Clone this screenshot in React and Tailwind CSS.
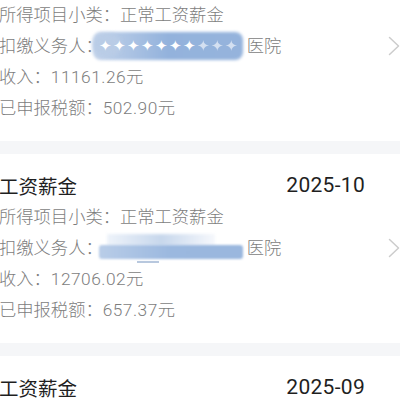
import React from 'react';

const records = [
  { title: '工资薪金', month: '2025-11', income: '11161.26', tax: '502.90', mask: 'dots' },
  { title: '工资薪金', month: '2025-10', income: '12706.02', tax: '657.37', mask: 'smear' },
  { title: '工资薪金', month: '2025-09', income: '10980.44', tax: '468.12', mask: 'dots' },
];

const Chevron = () => (
  <svg width="12" height="20" viewBox="0 0 12 20" className="absolute right-0 top-1/2 -translate-y-1/2">
    <path d="M1.5 1.5 L10.5 10 L1.5 18.5" fill="none" stroke="#cccccc" strokeWidth="1.5" strokeLinecap="round" strokeLinejoin="round" />
  </svg>
);

// blurred redaction over the withholding agent name
const Mask = ({ kind }) => {
  if (kind === 'dots') {
    return (
      <span className="relative inline-flex items-center w-[150px] h-[28px] ml-[-10px] mr-[4px]">
        <span className="absolute inset-0 rounded-[8px] bg-gradient-to-r from-[#c3d3ea] via-[#93b2dc] to-[#95b3dc] blur-[1.5px]" />
        <span className="absolute left-0 top-[2px] w-[28px] h-[22px] rounded-full bg-[#b9cce6] blur-[2px]" />
        <span className="relative flex items-center gap-[1px] pl-[6px] text-white text-[15px] leading-none">
          {'✦✦✦✦✦✦✦✦✦✦'.split('').map((c, i) => (
            <span key={i} className={i > 6 ? 'opacity-60' : ''}>{c}</span>
          ))}
        </span>
      </span>
    );
  }
  return (
    <span className="relative inline-flex w-[146px] h-[28px] ml-[-6px] mr-[4px]">
      <span className="absolute left-[10px] right-[28px] top-0 h-[12px] bg-gradient-to-r from-[#eef3fa] via-[#c7d7ec] to-[#f6f8fc] blur-[1.5px]" />
      <span className="absolute left-[2px] right-0 top-[11px] h-[14px] rounded-[3px] bg-gradient-to-r from-[#b9cde8] via-[#9bb8df] to-[#9ab7de] blur-[1px]" />
      <span className="absolute left-[40px] w-[22px] top-[27px] h-[2px] bg-[#b8c8de] blur-[0.5px]" />
    </span>
  );
};

const Card = ({ r }) => (
  <div className="relative bg-white pt-[16px] pb-[17px] pl-0 pr-[35px]">
    <div className="flex items-center justify-between h-[32px] text-[#1f1f1f]">
      <span className="ml-[-1px] text-[19.5px]">{r.title}</span>
      <span className="text-[21px] tracking-[0.3px] font-[Roboto]">{r.month}</span>
    </div>
    <div
      className="ml-[-1px] text-[17.3px] font-light text-[#7d7d7d] leading-[31px]"
      style={{ fontFamily: 'Roboto, "Noto Sans CJK SC", sans-serif' }}
    >
      <div>所得项目小类：正常工资薪金</div>
      <div className="flex items-center whitespace-nowrap">
        <span>扣缴义务人：</span>
        <Mask kind={r.mask} />
        <span>医院</span>
      </div>
      <div>收入：<span className="tracking-[0.5px]">{r.income}</span>元</div>
      <div>已申报税额：<span className="tracking-[0.5px]">{r.tax}</span>元</div>
    </div>
    <Chevron />
  </div>
);

export default function App() {
  return (
    <div
      className="w-[400px] h-[400px] overflow-hidden bg-[#f5f6f8]"
      style={{ fontFamily: '"Noto Sans CJK SC", "Noto Sans", sans-serif' }}
    >
      <div className="mt-[-48.5px] flex flex-col gap-[13px]">
        {records.map((r) => (
          <Card key={r.month} r={r} />
        ))}
      </div>
    </div>
  );
}
